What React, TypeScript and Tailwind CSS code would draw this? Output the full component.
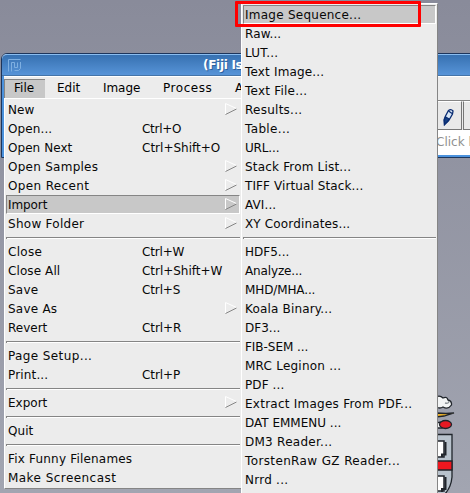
import { useLayoutEffect, useRef, useState } from "react";

type Entry = { label: string; key?: string; sub?: boolean; active?: boolean; w: number; kw?: number } | null;

const fileMenu: Entry[] = [
  { label: "New", sub: true, w: 26 },
  { label: "Open...", key: "Ctrl+O", w: 44, kw: 39 },
  { label: "Open Next", key: "Ctrl+Shift+O", w: 64, kw: 78 },
  { label: "Open Samples", sub: true, w: 90 },
  { label: "Open Recent", sub: true, w: 81 },
  { label: "Import", sub: true, active: true, w: 39 },
  { label: "Show Folder", sub: true, w: 76 },
  null,
  { label: "Close", key: "Ctrl+W", w: 34, kw: 42 },
  { label: "Close All", key: "Ctrl+Shift+W", w: 52, kw: 80 },
  { label: "Save", key: "Ctrl+S", w: 30, kw: 38 },
  { label: "Save As", sub: true, w: 49 },
  { label: "Revert", key: "Ctrl+R", w: 39, kw: 39 },
  null,
  { label: "Page Setup...", w: 84 },
  { label: "Print...", key: "Ctrl+P", w: 40, kw: 38 },
  null,
  { label: "Export", sub: true, w: 39 },
  null,
  { label: "Quit", w: 25 },
  null,
  { label: "Fix Funny Filenames", w: 124 },
  { label: "Make Screencast", w: 108 },
];

const importMenu: Entry[] = [
  { label: "Image Sequence...", active: true, w: 116 },
  { label: "Raw...", w: 36 },
  { label: "LUT...", w: 33 },
  { label: "Text Image...", w: 79 },
  { label: "Text File...", w: 62 },
  { label: "Results...", w: 57 },
  { label: "Table...", w: 45 },
  { label: "URL...", w: 34 },
  { label: "Stack From List...", w: 106 },
  { label: "TIFF Virtual Stack...", w: 118 },
  { label: "AVI...", w: 31 },
  { label: "XY Coordinates...", w: 105 },
  null,
  { label: "HDF5...", w: 44 },
  { label: "Analyze...", w: 57 },
  { label: "MHD/MHA...", w: 70 },
  { label: "Koala Binary...", w: 87 },
  { label: "DF3...", w: 35 },
  { label: "FIB-SEM ...", w: 63 },
  { label: "MRC Leginon ...", w: 96 },
  { label: "PDF ...", w: 39 },
  { label: "Extract Images From PDF...", w: 167 },
  { label: "DAT EMMENU ...", w: 96 },
  { label: "DM3 Reader...", w: 87 },
  { label: "TorstenRaw GZ Reader...", w: 155 },
  { label: "Nrrd ...", w: 43 },
];

/* Tracks a label out (or in) so that it fills the given width. */
function Label({ text, width }: { text: string; width: number }) {
  const ref = useRef<HTMLSpanElement>(null);
  const [tracking, setTracking] = useState(0);
  useLayoutEffect(() => {
    const natural = ref.current!.getBoundingClientRect().width;
    setTracking((width + 0.3 - natural) / text.length);
  }, [text, width]);
  return (
    <span ref={ref} className="shrink-0 whitespace-pre" style={{ letterSpacing: `${tracking}px` }}>
      {text}
    </span>
  );
}

function Entries({ items }: { items: Entry[] }) {
  return (
    <ul className="flex flex-col text-[12px] leading-[19px] text-[#080808]">
      {items.map((item, i) =>
        item ? (
          <li
            key={i}
            className={`flex h-[19px] items-start border pl-px ${
              item.active
                ? "border-t-[#858585] border-r-white border-b-white border-l-[#858585] bg-[#c8c8c8]"
                : "border-transparent"
            }`}
          >
            <div className="flex w-[134px]">
              <Label text={item.label} width={item.w} />
            </div>
            {item.key && <Label text={item.key} width={item.kw!} />}
            {item.sub && (
              <svg width="14" height="16" className="mr-px ml-auto shrink-0" fill="none">
                <path d="M1.5 13V2.5L12.5 7.5" stroke="#fff" />
                <path d="M1.5 13.500L12.500 8" stroke="#858585" />
              </svg>
            )}
          </li>
        ) : (
          <li key={i} className="flex h-[9px] pt-1">
            <hr className="h-[2px] w-full border-t border-l border-[#858585] bg-white" />
          </li>
        ),
      )}
    </ul>
  );
}

function Crest() {
  return (
    <svg width="22" height="100" className="absolute top-[393px] left-[434px]" fill="none" stroke="#20252b" strokeWidth="1.3">
      <path d="M2 4Q6 2 9 5Q13 3 14 7Q18 8 17.500 12Q14 17 9 14Q6 16 2 14Z" fill="#f2f4f5" />
      <path d="M11 10Q15 11 15 8" stroke="#8c9297" />
      <path d="M2 20L12 20.500L20 20L10 23L2 24Z" fill="#f0b52c" />
      <path d="M2 30L7 29L8 35H2Z" fill="#f2f4f5" />
      <ellipse cx="11.500" cy="31.500" rx="6" ry="4" fill="#e71923" />
      <path d="M2 41.500H18V84Q17 95 10 102H2Z" fill="#b8c2cc" />
      <path d="M2 48H10V64H2Z" fill="#fff" strokeWidth="1.500" />
      <path d="M11.500 49V61.500H8V64" strokeWidth="2" />
      <path d="M2 68H18V77H2Z" fill="#ee171f" />
      <path d="M2 83H10V98H2Z" fill="#fff" strokeWidth="1.500" />
      <path d="M11.500 84V96H8V99" strokeWidth="2" />
    </svg>
  );
}

export default function App() {
  return (
    <main className="relative h-[493px] w-[470px] overflow-hidden bg-linear-to-b from-[#898b9a] to-[#a2a5b1] font-['DejaVu_Sans',sans-serif] text-[12px]">
      <Crest />
      <section className="absolute top-[53px] left-px flex h-[105px] w-[480px] flex-col rounded-tl-[6px] border border-[#1d355b] bg-[#ececec]">
        <header className="flex h-[22px] shrink-0 rounded-tl-[5px] border-t border-b border-t-[#8abdf0] border-b-[#4474a8] bg-linear-to-b from-[#3771b1] to-[#5794d8] pl-1.5">
          <svg width="14" height="19" fill="none" stroke="#7eafe1">
            <path d="M.5 16.500V4.500H12.500M3.500 16.500V7.500H6.500M6.500 7.500V12.500H9.500V7.500M12.500 7V13.500L10.500 15.500H6.500" />
          </svg>
          <h1 className="ml-[181px] pt-[2px] text-[12px] leading-4 font-bold tracking-[-0.3px] whitespace-nowrap text-white [text-shadow:1px_1px_0_#2c61a0]">
            (Fiji Is
          </h1>
        </header>
        <div className="flex grow flex-col border-b-2 border-l-2 border-b-[#4b91dc] border-l-[#4b91dc]">
          <nav className="flex h-[24px] shrink-0 items-start border-t border-white pt-[2px] leading-[17px]">
            <span className="flex h-[19px] w-[41px] border-t border-l border-[#858585] bg-[#c8c8c8] pl-[9px]"><Label text="File" width={20} /></span>
            <span className="flex w-[46px] pt-px pl-3"><Label text="Edit" width={23} /></span>
            <span className="flex w-[60px] pt-px pl-3"><Label text="Image" width={37} /></span>
            <span className="flex w-[72px] pt-px pl-3"><Label text="Process" width={49} /></span>
            <span className="pt-px pl-3">A</span>
          </nav>
          <div className="flex h-[30px] shrink-0 border-t border-[#858585] pl-[431px]">
            <span className="flex w-[27px] shrink-0 justify-center border-t border-r border-b border-t-white border-r-[#777] border-b-[#777] bg-[#e9e9e9] pt-[6px]">
              <svg width="14" height="19" fill="none" stroke="#0a2c72" strokeWidth="1.300">
                <path d="M4.500 8L7.500 2.500Q10 .5 12 3L11.500 6L8 12L3.500 16.500L3 12Z" fill="#d8e6f5" />
                <path d="M3.500 11L4.500 9L8 11L7 13L3.500 16.500Z" fill="#174184" />
                <path d="M7.500 3L11 5.500" />
              </svg>
            </span>
            <span className="ml-px w-7 shrink-0 border-t border-b border-l border-t-white border-b-[#777] border-l-[#777] bg-[#e9e9e9]" />
          </div>
          <p className="grow overflow-hidden bg-white pt-1 pl-[432px] leading-[17px] whitespace-nowrap text-[#909090]">Click h</p>
        </div>
      </section>
      <section className="absolute top-[98px] left-1 w-[238px] border border-white border-b-[#858585] bg-[#ececec] p-px">
        <Entries items={fileMenu} />
      </section>
      <section className="absolute top-[3px] left-[241px] h-[500px] w-[197px] border border-white border-r-[#858585] bg-[#ececec] p-px">
        <Entries items={importMenu} />
      </section>
      <div className="absolute top-px left-[235px] h-[26px] w-[186px] rounded-[1px] border-3 border-[#ff0000]" />
    </main>
  );
}
